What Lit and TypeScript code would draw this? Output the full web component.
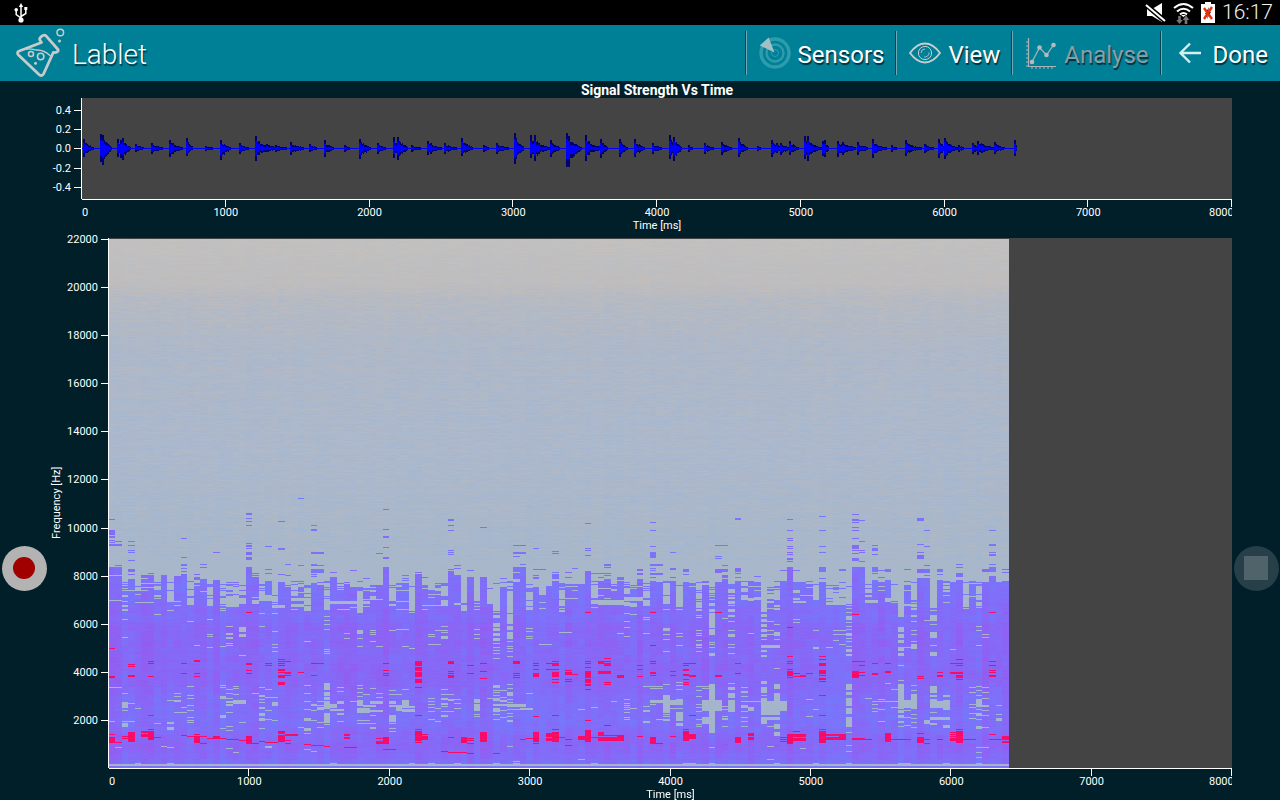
import { LitElement, html, svg, css } from "lit";
import { customElement, property } from "lit/decorators.js";

/* ---------- recorded data ---------- */

// Bursts of the microphone signal: start, rise above, drop below, length of the decay.
const BURSTS: number[][] = [
  [1, 9, 8, 9], [18, 14, 13, 3], [20, 13, 16, 8], [35, 9, 8, 5], [38, 8, 9, 4], [40, 10, 11, 7], [53, 4, 3, 7], [69, 5, 5, 10],
  [87, 8, 8, 9], [90, 5, 5, 10], [104, 10, 7, 5], [123, 2, 2, 8], [138, 8, 11, 9], [157, 5, 5, 8], [173, 12, 12, 8],
  [176, 7, 6, 24], [193, 3, 3, 14], [208, 6, 6, 14], [227, 4, 3, 7], [242, 8, 8, 8], [262, 3, 3, 4], [277, 9, 10, 10],
  [295, 5, 5, 7], [311, 11, 9, 5], [315, 11, 11, 9], [329, 3, 3, 10], [345, 7, 6, 10], [348, 5, 5, 10], [362, 5, 5, 12],
  [379, 10, 7, 10], [401, 3, 3, 5], [414, 5, 5, 12], [432, 15, 15, 8], [448, 13, 9, 6], [452, 13, 12, 8], [460, 3, 3, 12],
  [468, 8, 8, 8], [484, 15, 18, 6], [486, 12, 18, 12], [503, 13, 12, 6], [506, 7, 6, 14], [518, 9, 9, 6], [537, 9, 8, 7],
  [552, 9, 8, 9], [570, 5, 5, 9], [587, 13, 10, 5], [591, 11, 12, 7], [606, 3, 3, 3], [622, 5, 5, 8], [639, 6, 6, 9],
  [656, 10, 8, 8], [675, 2, 2, 3], [689, 8, 8, 6], [694, 5, 4, 14], [698, 5, 6, 10], [707, 7, 6, 8], [722, 12, 10, 5],
  [725, 12, 12, 9], [734, 2, 2, 8], [740, 7, 7, 3], [742, 8, 8, 3], [755, 7, 8, 9], [760, 6, 6, 14], [775, 6, 6, 9],
  [790, 9, 9, 5], [793, 4, 4, 13], [809, 3, 3, 5], [823, 8, 7, 10], [828, 3, 3, 12], [842, 4, 4, 8], [856, 9, 9, 8],
  [862, 10, 10, 9], [866, 4, 4, 10], [876, 3, 3, 5], [890, 5, 5, 9], [895, 7, 6, 18], [912, 6, 5, 9], [932, 8, 7, 2],
];

const BINS = 138;
const MAP_W = 900;
const MAP_H = 529;

// Line at which each time bin becomes loud, counted from the top of the map.
const ONSET = [
  328, 328, 350, 340, 352, 337, 337, 360, 336, 362, 337, 335, 355, 338, 340, 367, 341, 371, 362, 360, 353, 333, 338, 358, 342,
  365, 343, 348, 358, 348, 365, 344, 346, 371, 338, 352, 345, 349, 374, 352, 362, 346, 328, 362, 348, 344, 371, 343, 346, 351,
  347, 358, 332, 336, 372, 341, 366, 342, 351, 376, 348, 380, 343, 340, 371, 348, 356, 347, 342, 373, 346, 348, 346, 333, 362,
  343, 340, 353, 342, 364, 351, 340, 368, 343, 343, 366, 342, 368, 343, 343, 374, 346, 395, 343, 340, 365, 343, 348, 345, 343,
  373, 364, 371, 343, 328, 343, 343, 345, 366, 343, 365, 366, 366, 374, 328, 328, 362, 341, 343, 341, 364, 376, 346, 370, 339,
  339, 369, 341, 354, 343, 341, 369, 345, 369, 343, 338, 343, 343,
];

// Patches in units of a third of a line: x, y, number of time bins, height.
interface Sheet { x: number; y: number; marks: string }
const TONES: Sheet[] = [
  { x: -327, y: 603, marks: "327,238 327,270,1,15 327,288,1,6 327,300 327,306 327,312,1,6 345,303 345,312,1,6 345,375 384,303 384,315 384,330 384,336 384,360 384,387,1,8 384,402 423,405 444,399 444,405 483,405 540,294 540,351 540,372,1,6 540,384 540,393 579,402 600,372 600,381 639,336 735,219,1,6 735,234 735,243 735,255 735,309 735,315,1,6 735,324 735,336,1,9 735,351,1,9 735,381,1,15 735,399,2 756,405 795,318 795,387 795,399 834,243 834,324,1,6 834,402 855,372 855,405 894,174 894,375 933,255 933,267,1,6 933,336,2,6 933,375 933,387,2,12 933,402 933,408" },
  { x: -27, y: 963, marks: "633,13 651,15 633,27,1,12 690,37 751,30 788,54 846,-93 846,-72,1,6 846,21,1,57 828,-20 846,-38 846,-10,1,6 906,45 945,37 906,60 846,-152 945,66" },
  { x: 873, y: 723, marks: "6,285 6,294 45,276 45,282,1,24 63,291 141,117,1,6 141,135 141,150 141,210 141,216 141,222 141,267 141,273,1,30 165,255 165,264 165,285,1,18 201,270 201,291,1,9 240,141 240,291,1,12 300,294 339,195,2 339,216,2,6 339,228 339,262,1,15 357,252 357,261,1,18 339,280,2,18 396,204 396,267 396,285 396,291,1,6 420,267 456,212 456,218 456,276 456,282,1,15 495,276 513,264 495,291 552,129 552,204 552,210 552,225 552,273,1,30 573,279,2 591,291 612,252,1,6 612,261 612,279 612,285 651,291,1,9 711,267,1,6 711,279,1,6 750,126 750,150 750,198 750,216,1,18 750,252,2,6 750,264 750,270 750,279,2,6 750,291 807,216 807,264,1,6 807,291 846,267,1,9 846,282 945,195 945,228 945,234 945,267,1,12" },
  { x: 1773, y: 723, marks: "45,195,2 45,228 45,234 63,255 45,267,2,9 63,285,1,9 102,114,1,6 102,264,1,12 102,279 102,291 162,288 258,117 258,150 258,174 258,180 258,198 258,204 258,216 258,222 258,234,1,6 258,243 258,261,1,30 240,270,2 279,270 357,108 357,150 357,198 357,216 357,261,1,15 357,294 417,267,1,6 456,102 456,117,1,6 474,120 456,126 456,141 456,150 456,174 474,183 456,195,1,12 456,210,2 474,216 456,219 456,234,1,9 474,243 456,261,2,30 513,195 513,204,1,9 513,222 513,261,1,15 513,279 552,267,1,9 534,270 534,291 612,267 651,114,1,9 669,150 651,192 669,198 651,216 651,225,1,12 651,267,2,12 669,255 669,285 708,267,1,9 708,282 768,252 768,261 768,279,1,12 846,267,1,9 867,150 867,192,1,6 867,216 867,222,1,6 867,252 867,261,1,15 867,288,1,15 906,267 906,275" },
];
const GAPS: Sheet[] = [
  { x: -27, y: 963, marks: "27,45,2 27,120,2 66,90,4 66,105,1,6 66,124 66,135,1,6 66,147,1,6 105,126,3 105,102 123,54 123,69,2 123,81,2 201,78,1,12 201,102,1,24 222,123 222,135 261,78,1,10 261,93,1,15 261,114,1,20 279,60,1,9 279,75 300,93,2 318,81,1,25 318,117,1,20 357,114,4,18 378,132,2,9 357,150 417,96,1,10 456,111 456,120,1,12 474,105,2,18 513,90,1,12 513,108,1,12 513,135,2,9 573,96,3 573,114,3,9 573,132,2,9 573,147 612,108 612,123,1,12 612,138,1,15 672,132,1,18 690,123,6,9 711,147,2 750,141 768,93,1,66 789,117,3 807,111,1,6 789,138 867,84,1,20 867,111,1,12 885,90,3 885,123,2 867,132,1,6 885,147,2 924,93,1,45 924,156 66,231 66,177 162,162 261,183 201,150 318,177 318,222 318,228 279,255 318,261 378,198 378,219,1,6 378,231,1,6 378,249 357,258 378,255 417,201,1,15 417,222,1,9 417,285 474,198 513,159 513,213 513,252 513,261 513,273 474,159 672,168 672,180 672,192 672,207 672,267 672,273 672,279 612,243 729,219 729,234 768,210,1,12 807,210 807,216 807,222 768,234 807,243 768,258 828,258 867,210 885,207 906,258 924,264 27,381,2 66,399 66,426,1,18 84,429 66,450 105,444 27,483 66,483,2 66,489,1,12 162,489 201,486,1,6 201,501,1,9 201,420 222,399 222,408 222,420,1,6 222,456,2 240,441 261,378 261,405 261,414 261,435 261,450 261,471 261,480 261,486 357,375 396,378 357,381 378,387 396,384 357,408,1,9 378,399 396,402 378,414 378,423,1,6 396,420,2,12 378,432,1,6 357,465,1,9 378,456 378,498 417,486 378,510 357,504 474,381 495,387 456,399 474,405,1,6 495,411,2 474,417 513,426,1,12 474,426 474,441,1,6 495,450 474,459,1,9 474,474,1,9 495,477 513,480 474,504 612,375 612,399 612,423 633,432 612,447 633,450 612,474,1,9 633,480 594,501 612,504,1,9 612,519 651,423,2 633,435,2 651,441,1,9 672,369,1,20 672,396,1,12 672,411,1,9 672,423,1,24 672,459,1,30 672,492 690,432,1,12 711,423,1,9 690,447,2,6 711,381 711,393 711,459,1,6 711,483 651,486 651,501 750,423 768,375 768,384 768,396 768,408 789,402 768,420,1,18 789,435,2,6 768,444,2,15 807,384 828,399 807,423,2,9 828,411 807,450,2,6 768,480,2 768,489,3 807,465 807,501,1,6 867,390 867,402,2 867,423,1,9 867,435,2,6 885,441,1,12 906,426,1,9 867,465,1,20 867,489 867,504 867,513 906,438,2 906,447 183,558 201,561 45,561 378,564 396,576 495,558,1,6 612,567 633,573 105,609 201,609 357,612,2 474,612,2 690,609 789,612 906,612" },
  { x: 873, y: 723, marks: "24,330,1,12 24,348,1,24 24,378,1,15 24,396 63,324 84,342,3 63,375,4 63,387 84,352 102,325,1,9 123,318,1,18 123,360,1,15 165,370,1,5 183,300,1,70 183,378 183,387,1,6 222,300,1,60 222,378 222,387 261,318 261,330,1,42 279,318,1,75 279,405,1,9 279,429,1,12 279,444,1,9 279,459,1,9 279,474,1,9 279,489 279,501 279,510 279,519 279,534 318,340,1,60 318,408,1,24 318,438,1,12 318,456,1,21 318,483 318,498 318,504 318,513 318,528 378,336,1,24 378,366,1,9 378,381,1,9 378,444 378,453 378,468 378,474 420,318 420,330,1,12 420,366 420,384 474,339,1,15 474,360,1,15 495,354,2 474,384 474,456,2 495,318 513,330 573,336,1,18 591,345 612,354 573,363,1,10 591,360,4,15 573,381 591,324,2 672,330,1,12 672,351,3,12 672,369,2,9 672,399 690,402 672,423 672,441 672,468 690,378 711,318 732,336,1,12 732,360,1,15 732,411 732,417 732,459 789,318,1,27 789,351,1,21 789,387 789,444,1,9 789,462 789,477 789,513 828,318,1,60 828,387 828,459 828,468 828,495 867,306 867,318 885,366,1,15 885,387 885,405 885,411 885,450 885,459 885,465 885,480 885,492,1,6 885,501 885,513 924,408,1,21 924,435,1,9 924,447,1,15 924,486 924,501 924,519,1,9 123,438 123,456 123,468,1,10 102,450,2 84,462 84,468 84,492,2 24,504 6,498 6,447 222,447 222,462 222,474 420,492,2 651,459 0,627 0,660,1,9 0,675,1,9 0,687,2,9 24,681 84,654 84,663 84,672 84,681 84,693 102,684 123,627 123,642 123,654,1,6 123,669,1,6 123,678 123,693,2 84,717 102,723 123,705,1,6 141,642 141,657,1,6 165,657 165,669 165,684 222,657,1,12 222,672,1,21 222,702 222,708 261,654,2 279,615,1,9 279,630 279,636 279,645 279,657,1,6 279,672,3,6 279,684,1,12 279,702 279,717 300,630 300,651 318,612 318,624 318,636,1,12 318,657 318,666 318,672,3,9 318,687,3 318,699 318,708 318,720,1,6 357,672 357,684,2,6 378,639 300,660,1,6 300,690 300,711 534,687 573,681 630,663 672,657 672,669 672,675 672,681 672,687 672,696 672,711 672,717 690,684 732,618,3 750,624,2 789,612 828,606 828,615 789,645,1,54 750,660,5,9 750,672 732,678 732,690,1,6 828,627 828,657,1,9 828,669,1,6 828,684 828,696,1,27 828,729,1,9 807,660,1,15 807,684 789,702 789,708 789,717,1,6 732,723,1,6 768,717 885,618 906,624 885,630 885,648 906,660,3,33 885,672 885,681 885,693 885,717 906,711,2,20 885,732 885,738 924,612,1,147 318,798 924,801 339,843 534,837 24,849 84,849 165,849 279,849 339,849 573,849 846,849,2" },
  { x: 1773, y: 723, marks: "24,300,1,10 24,402,1,12 24,420,1,24 24,450,1,15 24,486 24,492 24,501 24,519,1,9 84,375 84,387,1,9 84,405,1,6 84,423 84,450 84,463,1,9 84,492 84,501 84,519 63,414 141,459 123,324,1,12 123,345,1,15 141,318,3 141,354,1,9 162,330 162,351,1,10 180,300,1,90 180,402,1,9 180,417,1,9 180,432,1,9 180,447,1,9 180,462,1,9 180,477 180,495,3,9 180,510,1,6 180,525,1,6 201,324 201,345 219,330,1,30 201,384,2 201,423 219,432 201,450 219,456,1,12 201,462 219,477 219,564 279,330,1,9 300,345,2 279,354,1,6 279,363,2,6 279,417 279,426 318,321 339,333,1,27 339,450 339,501,1,6 378,318,3 378,330 396,339,3,9 378,345 396,354,2,12 378,366,3,10 396,450,2 396,462,2 396,480 417,492 378,501 435,324,1,9 435,339,1,32 435,384 435,408,1,12 435,426 435,438 435,447 435,459,1,9 435,474 435,483 435,498 435,507,1,9 435,522,1,6 495,318 495,330 495,345 495,360,2,10 534,318 534,330 552,354,1,12 573,318,1,42 591,300,1,70 591,375,1,27 591,405,1,6 591,441,1,15 591,462,1,12 591,480,1,9 591,501,1,12 591,519,1,9 591,555 612,330 630,318,1,40 630,378 630,387 612,372,2,6 630,405,1,6 630,423 630,450 630,462 630,483 612,501 630,492,1,15 669,420 690,300,1,83 690,390 690,405,1,18 690,432 690,456,1,18 690,495 690,516,1,12 729,324 729,345 729,366 747,507 786,318,1,24 786,345,1,15 786,366,1,9 786,384 807,348 828,318,1,24 828,348,1,12 828,366,1,9 828,381 828,438 828,450 846,462 846,471 828,495 6,618 6,624 6,660,1,30 24,612,1,147 45,669 45,681,1,12 45,660,1,6 63,678 63,687 63,708 63,714,1,6 63,738 6,711,1,21 84,609 84,621,1,9 84,639,1,15 84,660,1,36 123,621 123,633,1,6 123,648 123,663 123,675,1,9 123,693 123,711 123,723 123,738 141,663,2 141,681,1,12 180,603,1,9 180,621,1,18 180,645 180,654,1,51 201,663,1,42 219,612,1,15 219,639,1,66 240,663,1,30 180,711,1,21 201,711,2,9 201,738 219,732,1,15 219,756,1,12 318,657 318,708 339,687 435,612,1,18 435,636,1,9 435,654,1,24 435,684,1,18 435,711,1,30 435,756 495,654 534,657 513,663,2 513,672 513,684 513,693 534,687 534,723 552,609 552,663,4 573,627 573,681,2 591,600 591,612,1,74 612,660,1,24 630,642,1,45 630,615 630,630 591,690,1,9 591,705,1,9 591,723,1,6 591,738 612,690 612,711 630,702 630,714 630,726 630,741 612,735 690,618,1,21 690,645,1,6 690,657,1,27 690,696 690,711,3,9 690,729,1,6 708,663,1,21 729,645,1,6 729,660,1,30 669,720,1,12 729,735,1,9 807,621 807,636 807,672 807,681 807,699 807,714 828,618 828,630 828,645 828,657,1,24 828,687 828,699,1,9 828,717 828,738,1,9 846,621 846,636 846,654 846,675,1,6 846,690 846,705 846,741 885,702 885,714,1,9 885,675 24,801 201,798 435,795 435,813 300,804 201,837 828,801 828,816 828,831 846,801 24,849 219,849 339,849 435,849 591,849,2 729,849 828,849" },
];
const PEAKS: Sheet[] = [
  { x: -27, y: 963, marks: "27,264 27,348,1,6 84,312 84,318 84,345,1,6 144,303 144,309 144,348 240,309 240,339 279,300,1,6 279,339 279,348 435,156 435,309,1,6 435,330 435,339 495,309 495,315 534,297 534,303,2 534,309 534,315 534,327,1,6 534,336 555,336,1,6 534,345,2 534,348,1,6 534,366,1,9 594,336 633,309,2 633,345 846,309 846,330 846,339 846,345 144,465 27,522 27,531,1,18 45,546 66,528 66,534 84,516,1,30 123,513,2,6 123,522,1,9 144,507 144,516,1,24 162,531 240,525 261,528 279,522 279,528,1,21 300,528 318,534 339,528,1,9 357,534 378,537,2 417,540 300,549 435,528,1,24 456,549 474,543 495,546,2 534,513,1,9 534,525,1,21 555,522,2,6 555,540 555,549 612,552 633,555,2 672,558 729,522,1,6 729,531,1,6 729,561,2 846,531,1,21 828,534 828,543,1,9 846,567,2 945,303,1,12 945,321,1,9 945,336,1,15 945,357,1,12" },
  { x: 873, y: 723, marks: "45,543 45,549,1,9 45,564,1,9 45,576,1,15 45,597,1,12 45,621 45,705 45,747 45,753,1,30 63,762 63,768,1,12 45,786 141,543,1,9 141,573 141,579 141,585,1,9 201,555 201,579 240,549 240,573 240,594 339,543,1,9 339,579 339,585 339,591 396,549 396,555 396,567 396,579,1,12 438,549 456,543 456,549,1,9 438,567 456,567 456,576,1,15 456,597 456,606 495,570 495,576,1,9 513,582 495,597 495,603 552,396 552,543 552,549 552,561 552,573,1,21 552,597,1,9 552,606 552,612,1,6 552,627 591,543,1,9 612,534 612,543 612,549,1,9 591,573,2,9 612,606 612,612 651,585,1,9 711,555 711,567 711,588 750,396 750,495 750,543 750,549 750,576,1,6 750,585 807,573 807,585 846,549,2 846,555,1 846,567,1,6 846,582,1,6 867,585,1,6 846,597 846,606 846,612 945,396 945,585,1,6 396,708 456,705 552,720 612,735 867,705 141,771 183,771,1,18 201,774 201,780 201,788 240,756,1,30 357,777 378,774 396,756,1,30 396,789 438,759,1,12 456,747 456,756,1,30 438,774,1,9 474,771 495,777 495,795 534,768,1,12 552,750,1,36 573,771 591,756,1,12 612,765,3 591,771,2,12 630,771,1,12 651,765,1,18 711,768 750,771,1,21 768,789 807,768 846,747 846,753,1,30 867,762,1,15 123,813 141,816,3 201,819 279,819" },
  { x: 1773, y: 723, marks: "45,396 45,585,1,6 102,549 102,579 258,441 258,528 258,543 258,549 258,567 258,573,1,15 279,579 279,588 300,585,1,6 318,579 258,591 357,528 357,537 357,549,1,9 357,570,1,12 357,585 357,594,1,6 357,603 357,645 357,705 456,402 456,543,2 474,555 456,573,1,21 474,576 474,585 513,549 513,579,1,6 552,549 552,573,1,6 651,588 651,594 708,576 708,585,1,6 747,549,2 768,537 768,555 747,576,2,6 768,585,1,9 768,597 867,396 867,543 867,555 867,570 867,576 867,585,1,6 102,771,1,18 141,759,1,9 141,771,1,9 240,771 240,777 240,783 258,762,1,30 279,753 279,762,2,9 279,774,2,9 357,747 357,753,1,36 378,762,3,6 378,771,3,9 417,762,1,18 456,774,2,6 495,777 552,759,1,27 573,777,3 651,759 651,771,1,18 669,777 669,789 708,777 747,756 747,762 747,768 747,774,1,9 768,747 768,753,1,36 786,777,2 867,762 867,777,2 906,768,1,12 906,783,1,6" },
];

function hash(a: number, b: number): number {
  let h = Math.imul(a + 11, 374761393) ^ Math.imul(b + 7, 668265263);
  h = Math.imul(h ^ (h >>> 13), 1274126177);
  return ((h ^ (h >>> 16)) >>> 0) / 4294967296;
}

const edge = (bin: number) => Math.min(MAP_W, Math.round(bin * 6.52 - 0.2));

// Piecewise share of purple in the loud part, by line.
const WARMTH: number[][] = [
  [326, 0], [350, 0.06], [370, 0.18], [392, 0.34], [415, 0.3], [435, 0.38], [450, 0.28], [480, 0.08], [490, 0.2], [505, 0.42], [518, 0.25], [529, 0],
];
const AIR: number[][] = [
  [0, 193, 192, 192], [44, 190, 189, 190], [58, 182, 186, 194], [110, 174, 184, 200], [210, 171, 184, 204], [290, 169, 183, 202], [529, 163, 181, 203],
];
function ramp(table: number[][], y: number): number[] {
  let i = 1;
  while (i < table.length - 1 && table[i][0] < y) i++;
  const a = table[i - 1], b = table[i];
  const t = Math.max(0, Math.min(1, (y - a[0]) / (b[0] - a[0])));
  return a.slice(1).map((v, k) => v + (b[k + 1] - v) * t);
}

/* ---------- axes ---------- */

const TIMES = [0, 1000, 2000, 3000, 4000, 5000, 6000, 7000, 8000];

const axisStyles = css`
  :host { display: block; }
  svg { display: block; width: 100%; height: 100%; overflow: hidden; }
  rect { fill: #fff; shape-rendering: crispEdges; }
  text { fill: #fff; font: 11px Roboto, sans-serif; }
`;

@customElement("time-axis")
export class TimeAxis extends LitElement {
  static styles = [axisStyles, css`
    svg.scale { height: 21px; }
    .name { font: 11px/11px Roboto, sans-serif; color: #fff; text-align: center; }
  `];
  render() {
    return html`
      <svg class="scale" role="img" aria-label="Time in milliseconds">
        <rect width="100%" height="1"></rect>
        ${TIMES.map((t, i) => svg`
          ${i ? svg`<rect x="${i * 12.5}%" y="1" width="1" height="7" transform="translate(-1 0)"></rect>` : null}
          <text x="${i * 12.5}%" y="17" text-anchor="${i === 0 || i === 8 ? "start" : "middle"}"
            dx="${i === 8 ? -23 : 0}">${t}</text>`)}
      </svg>
      <div class="name">Time [ms]</div>`;
  }
}

@customElement("value-axis")
export class ValueAxis extends LitElement {
  @property({ attribute: false }) ticks: { at: number; label: string }[] = [];
  static styles = [axisStyles, css`
    :host { min-width: 0; min-height: 0; }
    svg { overflow: visible; }
  `];
  render() {
    return html`<svg>
      <rect x="100%" width="1" height="100%" transform="translate(-1 0)"></rect>
      ${this.ticks.map((t) => svg`
        <rect x="100%" y="${t.at}%" width="7" height="1" transform="translate(-8 0)"></rect>
        <text x="100%" y="${t.at}%" dx="-11" dy="4" text-anchor="end">${t.label}</text>`)}
    </svg>`;
  }
}

/* ---------- charts ---------- */

@customElement("signal-chart")
export class SignalChart extends LitElement {
  static styles = css`
    :host { display: grid; grid-template-columns: 34px 1fr; grid-template-rows: 17px 101px auto; }
    .title { grid-column: 2; margin: 0; font: bold 14px/18px Roboto, sans-serif; color: #fff; text-align: center; }
    .plot { background: #444; min-width: 0; }
    .plot svg { display: block; width: 100%; height: 100%; }
    .outer { fill: #00006e; }
    .inner { fill: #0000ff; }
    time-axis { grid-column: 2; }
  `;
  private ticks = ["0.4", "0.2", "0.0", "-0.2", "-0.4"].map((label, i) => ({ at: 11.4 + i * 19.2, label }));

  private envelope() {
    const up = new Array(935).fill(0), down = new Array(935).fill(0);
    for (const [x, u, d, tail] of BURSTS) {
      for (let k = 0; k < tail + 2 && x + k < 935; k++) {
        const fall = k < 2 ? 1 : 0.7 * Math.pow(1 - k / (tail + 4), 1.3) * (0.75 + 0.5 * hash(x, k));
        up[x + k] = Math.max(up[x + k], Math.round(u * fall));
        down[x + k] = Math.max(down[x + k], Math.round(d * fall));
      }
    }
    return { up, down };
  }

  render() {
    const { up, down } = this.envelope();
    let outer = "", inner = "M0 50h935v1h-935z";
    up.forEach((u, x) => {
      const d = down[x];
      if (!u && !d) return;
      outer += `M${x} ${50 - u}h1v${u + d + 1}h-1z`;
      const iu = Math.floor(u * 0.6), id = Math.floor(d * 0.6);
      inner += `M${x} ${50 - iu}h1v${iu + id + 1}h-1z`;
    });
    return html`
      <h2 class="title">Signal Strength Vs Time</h2>
      <value-axis .ticks=${this.ticks}></value-axis>
      <div class="plot">
        <svg viewBox="0 0 1150 101" preserveAspectRatio="none" shape-rendering="crispEdges" role="img" aria-label="Signal strength">
          <path class="outer" d=${outer}></path><path class="inner" d=${inner}></path>
        </svg>
      </div>
      <time-axis></time-axis>`;
  }
}

@customElement("spectrum-chart")
export class SpectrumChart extends LitElement {
  static styles = css`
    :host { display: grid; grid-template-columns: 17px 44px 1fr; grid-template-rows: minmax(0, 1fr) auto; min-height: 0; }
    .name { writing-mode: vertical-rl; transform: rotate(180deg); font: 11px/17px Roboto, sans-serif; color: #fff; text-align: center; }
    .plot { background: #444; min-width: 0; min-height: 0; padding-top: 1px; }
    canvas { display: block; width: 80.15%; height: 100%; image-rendering: pixelated; }
    time-axis { grid-column: 3; }
  `;
  private ticks = Array.from({ length: 11 }, (_, i) => ({ at: 0.15 + i * 9.08, label: String(22000 - i * 2000) }));

  firstUpdated() {
    const canvas = this.renderRoot.querySelector("canvas")!;
    const ctx = canvas.getContext("2d")!;
    const loud = new Uint8Array(BINS * MAP_H);
    for (let b = 0; b < BINS; b++) {
      for (let y = ONSET[b]; y < MAP_H; y++) loud[b * MAP_H + y] = 1;
      // Quiet bins fade in as single lines, grouped in pairs of neighbours.
      for (let y = 342; y < ONSET[b]; y++) {
        const share = 0.22 + (y - 342) * 0.012;
        if (hash(b * 17, y * 31 + 300) < share * 0.6 || hash((b >> 1) * 13, y * 29 + 2000) < share * 0.5) loud[b * MAP_H + y] = 1;
      }
      for (let y = 525; y < 527; y++) loud[b * MAP_H + y] = 0;
    }
    const stamp = (sheets: Sheet[], level: number) => {
      for (const s of sheets) {
        for (const mark of s.marks.split(" ")) {
          const [x, y, n = 1, h = 3] = mark.split(",").map(Number);
          const first = Math.round((x + s.x) / 19.56);
          const top = Math.round((y + s.y) / 3);
          const rows = Math.max(1, Math.round(h / 3));
          for (let b = first; b < first + n && b < BINS; b++)
            for (let r = top; r < top + rows && r < MAP_H; r++) if (b >= 0 && r >= 0) loud[b * MAP_H + r] = level;
        }
      }
    };
    stamp(TONES, 1);
    stamp(GAPS, 0);
    stamp(PEAKS, 2);

    for (let b = 0; b < BINS; b++) {
      const x = edge(b), w = (b === BINS - 1 ? MAP_W : edge(b + 1)) - x;
      const strength = (364 - ONSET[b]) / 40;
      for (let y = 0; y < MAP_H; y++) {
        const n = hash(b, y) - 0.5, streak = hash(b >> 1, y + 900) - 0.5, line = hash(3, y) - 0.5;
        const kind = loud[b * MAP_H + y];
        let c: number[];
        if (kind === 2) c = [248 + n * 10, 12, 104 + n * 20];
        else if (kind === 1) {
          const patch = hash(b * 7, (y >> 3) * 19 + 4000) - 0.5;
          const warm = Math.max(0, Math.min(1, ramp(WARMTH, y)[0] + strength * 0.28 + n * 0.2 + line * 0.12 + patch * 0.24 + (hash(b, 5000) - 0.5) * 0.24));
          c = [119 + warm * 36, 119 - warm * 34, 252 - warm * 14];
        } else {
          c = ramp(AIR, y);
          const calm = y < 50 ? 0.5 : y > 320 ? 0.3 : 0.8;
          const drift = (n * 9 + streak * 7 + line * 4 + (hash(b, 7000) - 0.5) * 3) * calm;
          c = [c[0] + drift, c[1] + drift * 0.2, c[2] - drift * 0.7];
        }
        ctx.fillStyle = `rgb(${c.map((v) => Math.round(v)).join(",")})`;
        ctx.fillRect(x, y, w, 1);
      }
    }
  }

  render() {
    return html`
      <div class="name">Frequency [Hz]</div>
      <value-axis .ticks=${this.ticks}></value-axis>
      <div class="plot"><canvas width=${MAP_W} height=${MAP_H} role="img" aria-label="Spectrogram"></canvas></div>
      <time-axis></time-axis>`;
  }
}

/* ---------- icons ---------- */

const usbIcon = html`<svg width="14" height="20" viewBox="0 0 14 20" fill="none" stroke="#fff" stroke-width="1.5">
  <path d="M7 17V3M7 15L2.2 11.5V7M7 13.5L11.8 10.5V6"/><path d="M7 0L9.2 4H4.8zM10.3 4h3v3h-3z" fill="#fff" stroke="none"/>
  <circle cx="2.2" cy="6.7" r="1.8" fill="#fff" stroke="none"/><circle cx="7" cy="17" r="2.6" fill="#fff" stroke="none"/></svg>`;
const muteIcon = html`<svg width="21" height="20" viewBox="0 0 21 20">
  <path d="M2 6h5l10-6v19L7 13H2z" fill="#fff"/><path d="M0 1L20 18" stroke="#000" stroke-width="5"/><path d="M1 2L20 18" stroke="#fff" stroke-width="2"/></svg>`;
const wifiIcon = html`<svg width="21" height="22" viewBox="0 0 21 22" fill="none" stroke="#fff" stroke-width="2">
  <path d="M1 6Q10.500-2 20 6M4 9.500Q10.500 4 17 9.500M7 12.500Q10.500 9.500 14 12.500"/><path d="M8 13h5l-2.500 2z" fill="#fff" stroke="none"/>
  <path d="M6.500 14v5.500M13 22v-5.500" stroke="#777" stroke-width="2.600"/><path d="M3.200 18h6.600l-3.300 4zM9.700 18h6.600L13 13.500z" fill="#777" stroke="none"/></svg>`;
const batteryIcon = html`<svg width="14" height="21" viewBox="0 0 14 21">
  <path d="M4 0h6v2h4v19H0V2h4z" fill="#fff"/><path d="M8 5l-4 7h3l-1 5 4-7H7z" fill="#222"/><path d="M3 6l8 11M11 5L3 17" stroke="#e8310a" stroke-width="2.400"/></svg>`;
const flaskIcon = html`<svg width="50" height="50" viewBox="0 0 50 50" fill="none" stroke="#c8cacb" stroke-linejoin="round" stroke-linecap="round">
  <path stroke-width="2.800" d="M26.500 14.500L25 12.300c-1.500-2.500 3.500-6.500 6-4.500L43 21.500c.8 2-1.500 3.500-4.700 3L28.500 46c-.8 1.800-3 2-4.500.6L3.500 27c-1.600-1.600-1.300-3.200.8-4z"/>
  <path stroke-width="1.300" d="M10 21.500c5-2 8 .5 12 .5 5 0 9 1.500 13.500 6"/><circle cx="16" cy="26" r="2.500" stroke-width="1.600"/>
  <circle cx="25.700" cy="28.500" r="3.200" stroke-width="1.600"/><circle cx="20.500" cy="35.300" r="1.500" fill="#c8cacb" stroke="none"/>
  <circle cx="45.300" cy="4.500" r="3.300" stroke-width="1.500"/><circle cx="44.500" cy="13" r="1.500" fill="#c8cacb" stroke="none"/></svg>`;
const sensorsIcon = html`<svg class="icon" viewBox="0 0 32 32" fill="none" stroke="#2f9cae">
  <circle cx="16" cy="16" r="14" stroke-width="3.400"/><circle cx="16" cy="16" r="8.500" stroke-width="2.400"/><circle cx="16" cy="16" r="3.500" stroke-width="1"/>
  <path d="M15.500 15.500L.7 8.500 9.700.5z" fill="#a3bfc3" stroke="none"/></svg>`;
const viewIcon = html`<svg class="icon" viewBox="0 0 32 32" fill="none" stroke="#c8cdce">
  <path d="M1 16Q8 6.500 16 6.500T31 16Q24 25.500 16 25.500T1 16z" stroke-width="1.800"/><circle cx="16" cy="16" r="6.600" stroke-width="1"/>
  <path d="M12 16a4 4 0 0 1 4-4M20 15.500a4.200 4.200 0 0 1-5 4.500" stroke-width=".8"/></svg>`;
const analyseIcon = html`<svg class="icon" viewBox="0 0 32 32" fill="none" stroke="#a9b4b7">
  <path d="M3.500 1v28.500H31" stroke-width="1.200"/><path d="M1 5h2M1 9h2M1 13h2M1 17h2M1 21h2M1 25h2M1 29h2M7 30v2M11 30v2M15 30v2M19 30v2M23 30v2M27 30v2" stroke-width="1"/>
  <path d="M7 25l7.500-14.500 7 7.500L28.500 8" stroke-width="1.300"/><g fill="#b5bbbd" stroke="none"><circle cx="7" cy="25" r="2.300"/><circle cx="14.500" cy="10.500" r="2.300"/><circle cx="21.500" cy="18" r="2.300"/><circle cx="28.500" cy="8" r="2.300"/></g></svg>`;
const doneIcon = html`<svg class="icon" viewBox="0 0 32 32" fill="none" stroke="#d5eef0" stroke-width="2.400">
  <path d="M6 16H27M16 6.500L6.500 16l9.500 9.500"/></svg>`;

/* ---------- page ---------- */

@customElement("app-root")
export class AppRoot extends LitElement {
  static styles = css`
    :host { display: flex; flex-direction: column; height: 100vh; background: #001f29; color: #fff; font-family: Roboto, sans-serif; overflow: hidden; }
    .status { display: flex; align-items: center; gap: 7px; height: 25px; flex: none; box-sizing: border-box; padding: 0 7px 0 14px; background: #000; }
    .status svg { flex: none; }
    .status .clock { font-size: 21px; line-height: 25px; font-weight: 300; color: #f4f4f4; }
    .spring { flex: 1; }
    .bar { display: flex; align-items: center; height: 56px; flex: none; box-sizing: border-box; padding-left: 15px; background: #008097; }
    .logo { flex: none; height: 50px; }
    .brand { margin: 0 0 0 7px; padding-top: 4px; font-size: 28px; line-height: 50px; font-weight: 300; text-shadow: 1px 2px 1px #00303c; }
    .action { display: flex; align-items: center; gap: 7px; height: 44px; padding: 0 12px; border: 0; border-left: 1px solid #6fa9b5; box-shadow: -1px 0 #07414e; background: none; color: #fff; font: 24px/38px Roboto, sans-serif; text-shadow: 1px 2px 1px #00303c; }
    .action span { padding-top: 3px; }
    .action:disabled { color: #8a9ea5; }
    .icon { width: 32px; height: 32px; flex: none; }
    .main { flex: 1; min-height: 0; display: grid; grid-template-columns: 48px minmax(0, 1fr) 48px; }
    .side { display: flex; align-items: center; justify-content: center; padding-top: 255px; }
    .round { width: 45px; height: 45px; padding: 0; border: 0; border-radius: 50%; display: grid; place-items: center; background: #b3b3b3; }
    .round.off { background: #263f48; }
    .dot { width: 22px; height: 22px; border-radius: 50%; background: #a00000; }
    .square { width: 24px; height: 24px; background: #50636a; }
    .charts { display: grid; grid-template-rows: auto minmax(0, 1fr); gap: 7px; min-height: 0; }
  `;
  private actions = [
    { label: "Sensors", icon: sensorsIcon, off: false },
    { label: "View", icon: viewIcon, off: false },
    { label: "Analyse", icon: analyseIcon, off: true },
    { label: "Done", icon: doneIcon, off: false },
  ];
  render() {
    return html`
      <div class="status">${usbIcon}<span class="spring"></span>${muteIcon}${wifiIcon}${batteryIcon}<span class="clock">16:17</span></div>
      <header class="bar">
        <span class="logo">${flaskIcon}</span><h1 class="brand">Lablet</h1><span class="spring"></span>
        ${this.actions.map((a) => html`<button class="action" ?disabled=${a.off}>${a.icon}<span>${a.label}</span></button>`)}
      </header>
      <main class="main">
        <div class="side"><button class="round" aria-label="Record"><span class="dot"></span></button></div>
        <div class="charts"><signal-chart></signal-chart><spectrum-chart></spectrum-chart></div>
        <div class="side"><button class="round off" aria-label="Stop" disabled><span class="square"></span></button></div>
      </main>`;
  }
}
